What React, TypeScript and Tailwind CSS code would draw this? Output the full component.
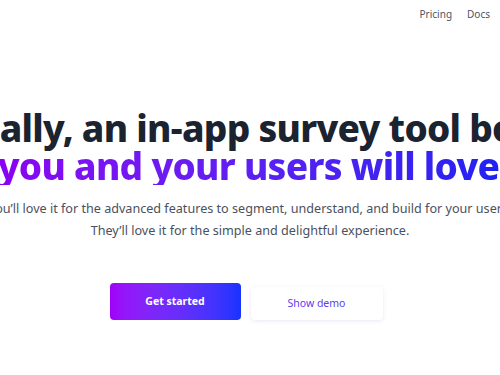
import React from "react";

export default function App() {
  return (
    <div className="w-[500px] h-[375px] overflow-hidden bg-white" style={{ fontFamily: '"Noto Sans", "Open Sans", sans-serif' }}>
      <nav className="flex justify-end items-center gap-[15px] h-[29px] pr-[10px] text-[10px] text-gray-600">
        <span>Pricing</span>
        <span>Docs</span>
      </nav>
      <main className="flex flex-col items-center pt-[80px]">
        <h1 className="flex flex-col items-center text-[37px] leading-[38px] font-extrabold tracking-[-0.7px] whitespace-nowrap">
          <span className="text-[#1b2230]">Finally, an in-app survey tool both</span>
          <span className="pr-[3px] bg-gradient-to-r from-[#8a00f2] to-[#1d22f2] bg-clip-text text-transparent">you and your users will love</span>
        </h1>
        <p className="mt-[13px] flex flex-col items-center text-[12.6px] leading-[22px] text-[#4b5060] whitespace-nowrap">
          <span>You’ll love it for the advanced features to segment, understand, and build for your users.</span>
          <span>They’ll love it for the simple and delightful experience.</span>
        </p>
        <div className="mt-[41px] pr-[8px] flex gap-[10px] items-end">
          <button className="w-[131px] h-[37px] rounded-[4px] bg-gradient-to-r from-[#a000f8] to-[#1533ff] text-white text-[10.5px] font-bold">Get started</button>
          <button className="w-[132px] h-[33px] rounded-[4px] bg-white shadow-[0_1px_4px_rgba(120,90,200,0.15)] text-[#5b3df0] text-[10.5px]">Show demo</button>
        </div>
      </main>
    </div>
  );
}
